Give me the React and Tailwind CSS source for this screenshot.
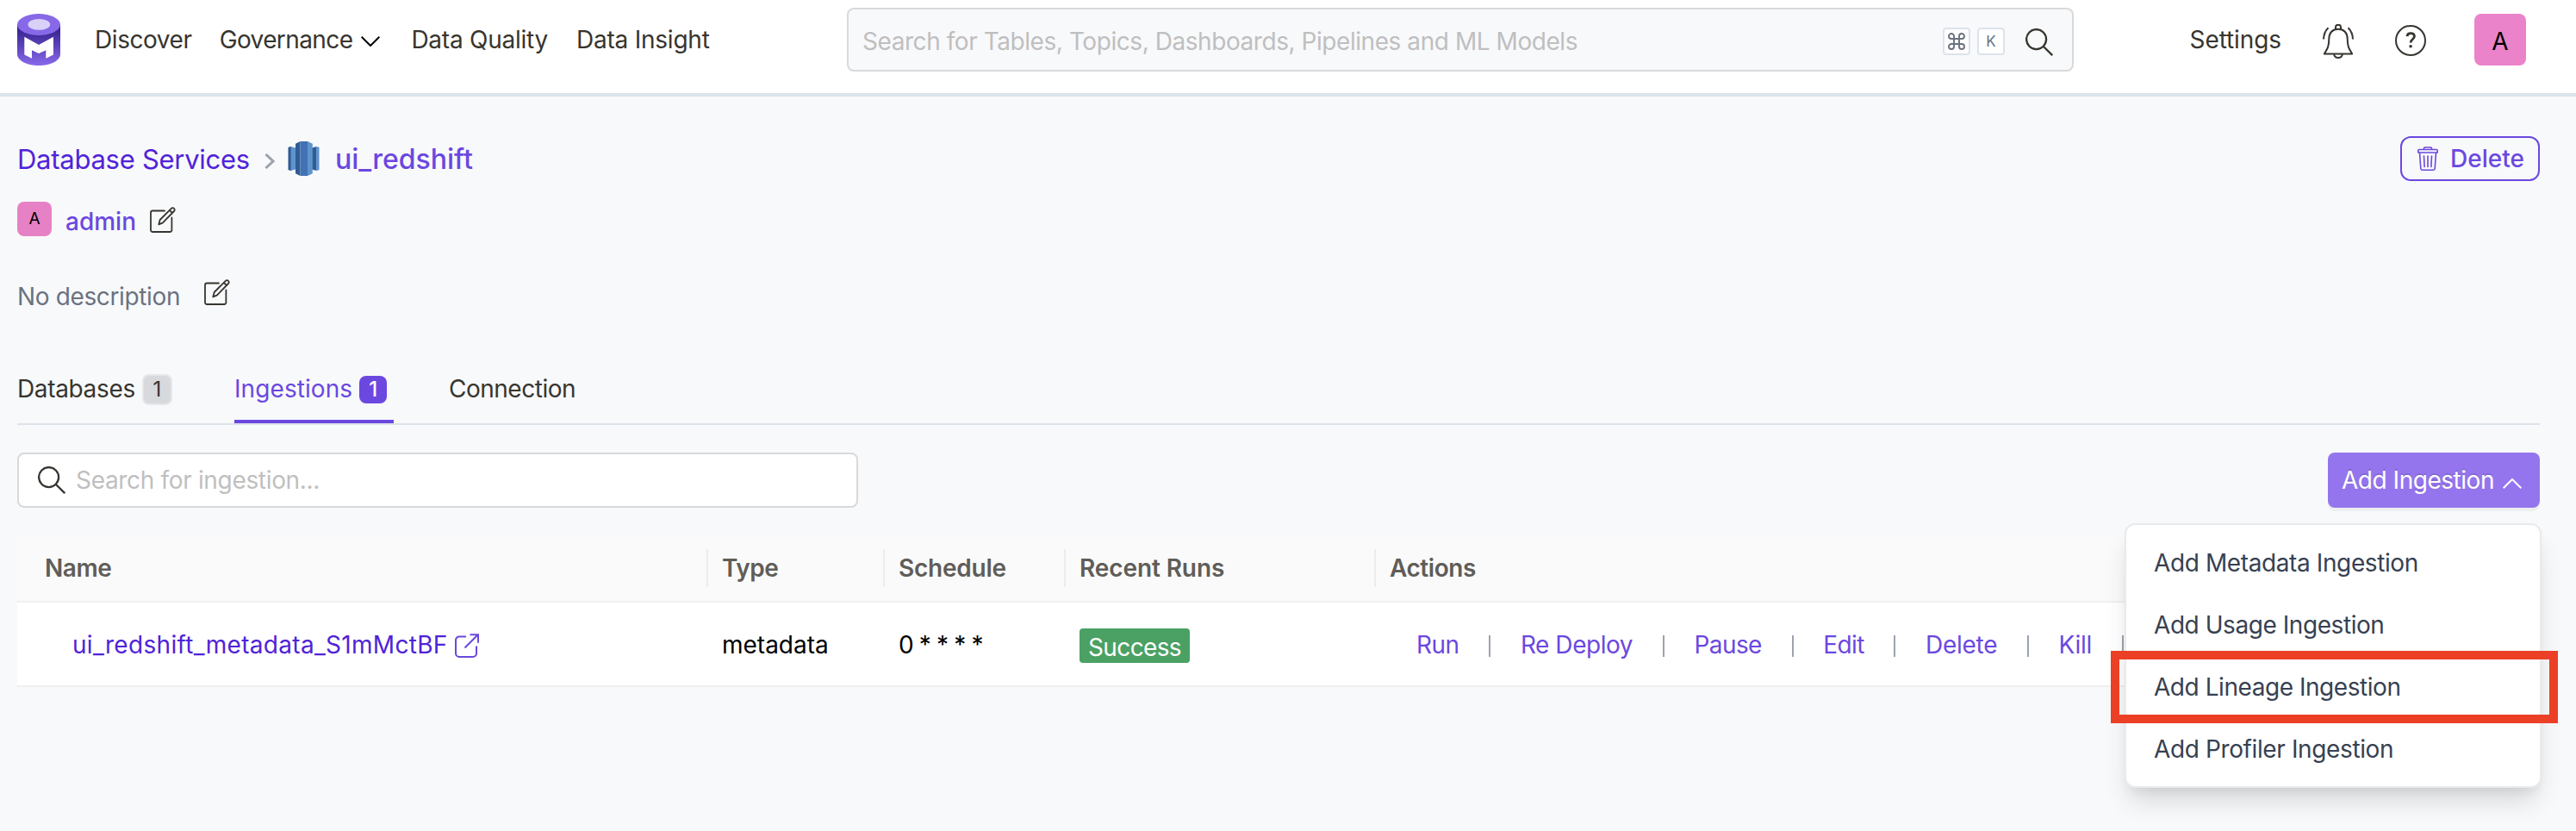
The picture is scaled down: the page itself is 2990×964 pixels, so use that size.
import React from "react";

function LogoIcon() {
  return (
    <svg className="h-[60px] w-[50px] shrink-0" viewBox="0 0 50 60" fill="none">
      <defs>
        <linearGradient id="logo-body" x1="0" y1="16" x2="0" y2="60" gradientUnits="userSpaceOnUse">
          <stop offset="0" stopColor="#34208d" />
          <stop offset="1" stopColor="#8869ea" />
        </linearGradient>
      </defs>
      <path d="M0 12.5V47C0 54 11 60 25 60s25-6 25-13V12.5Z" fill="url(#logo-body)" />
      <ellipse cx="25" cy="12.5" rx="25" ry="12.5" fill="#8769e8" />
      <ellipse cx="25.3" cy="12.4" rx="12.8" ry="6.4" fill="#dad1f8" />
      <path
        d="M8.3 26.7 25 36l17-9.3v20.8l-8.7 4.2v-9.4L25 46l-8-3.7v9.4l-8.7-4.2Z"
        fill="#fff"
      />
    </svg>
  );
}

function RedshiftIcon() {
  return (
    <svg className="h-10 w-[37px] shrink-0" viewBox="0 0 37 40">
      <path d="M3.500 6 9 7.500v25L3.500 34Z" fill="#5f93cc" />
      <path d="M3.800 5.700.500 7v26l3.300 1.300Z" fill="#2f5c94" />
      <path d="M33.500 6 28 7.500v25l5.500 1.500Z" fill="#2f5c94" />
      <path d="M33.200 5.700 36.500 7v26l-3.300 1.300Z" fill="#5f93cc" />
      <path d="M14.500 0 9 2.700v34.600l5.500 2.700Z" fill="#2f5c94" />
      <path d="M23 0l5.800 2.700v34.600L23 40Z" fill="#5f93cc" />
      <path d="M14.500 0H23v40h-8.500Z" fill="#4272b4" />
    </svg>
  );
}

function SearchIcon() {
  return (
    <svg className="size-8 shrink-0" viewBox="0 0 32 32" fill="none" stroke="#37352f" strokeWidth="2.300">
      <circle cx="12.600" cy="12.600" r="11.500" />
      <path d="m20.700 20.700 10.500 10.500" />
    </svg>
  );
}

function EditIcon() {
  return (
    <svg className="size-[30px] shrink-0" viewBox="0 0 30 30" fill="none" stroke="#37352f" strokeWidth="1.800" strokeLinejoin="round" strokeLinecap="round">
      <path d="M17 4.500H3.200A2.200 2.200 0 0 0 1 6.700v20A2.200 2.200 0 0 0 3.200 29h20a2.200 2.200 0 0 0 2.200-2.300V12.500" />
      <path d="M10.300 20.300 11.700 15 24.800 1.800a2.200 2.200 0 0 1 3.200 0 2.200 2.200 0 0 1 0 3.200L15 18.300ZM22.800 3.800l3.200 3.200" />
    </svg>
  );
}

function BellIcon() {
  return (
    <svg className="h-10 w-9 shrink-0" viewBox="0 0 36 40" fill="none" stroke="#37352f" strokeWidth="2" strokeLinejoin="round">
      <path d="M1.800 34.500C6 28 7.300 25 7.300 17 7.300 10 11.500 5.700 18 5.700S28.700 10 28.700 17c0 8 1.300 11 5.500 17.500Z" />
      <path d="M15 6V3.500a3 2.800 0 0 1 6 0V6M13.200 34.800c.3 2.600 2.200 4.200 4.800 4.200s4.500-1.600 4.800-4.200" />
      <path d="M1 17.500C1.200 11.500 3 7.500 6.500 4.200M35 17.500c-.2-6-2-10-5.500-13.300" />
    </svg>
  );
}

function HelpIcon() {
  return (
    <svg className="size-9 shrink-0" viewBox="0 0 36 36" fill="none" stroke="#37352f" strokeWidth="2">
      <circle cx="18" cy="18" r="17" />
      <path d="M14 13.200c.2-2.200 1.800-3.600 4.200-3.600 2.500 0 4.200 1.400 4.200 3.600 0 3.300-4.300 3.300-4.300 7.300" strokeWidth="2.800" />
      <circle cx="18.100" cy="24.800" r="1.800" fill="#37352f" stroke="none" />
    </svg>
  );
}

function CommandIcon() {
  return (
    <svg className="size-5" viewBox="0 0 20 20" fill="none" stroke="#6b7280" strokeWidth="1.900">
      <path d="M7 7V4a3 3 0 1 0-3 3h12a3 3 0 1 0-3-3v12a3 3 0 1 0 3-3H4a3 3 0 1 0 3 3Z" />
    </svg>
  );
}

function TrashIcon() {
  return (
    <svg className="h-7 w-6 shrink-0" viewBox="0 0 24 28" fill="none" stroke="#6b48e0" strokeWidth="1.600" strokeLinejoin="round" strokeLinecap="round">
      <path d="M7.500 3V2q0-1 1-1h7q1 0 1 1v1M2 3.500h20q1.200 0 1.200 1.200V7H.8V4.700Q.8 3.500 2 3.500ZM2.500 7l1.300 18.500q.2 1.700 1.700 1.700h13q1.500 0 1.700-1.700L21.500 7M7.500 11l.6 12.500M12 11v12.500M16.500 11l-.6 12.500" />
    </svg>
  );
}

function ExternalIcon() {
  return (
    <svg className="size-7 shrink-0" viewBox="0 0 28 28" fill="none" stroke="#6b48e0" strokeWidth="2">
      <path d="M13 3.500H5a4 4 0 0 0-4 4V23a4 4 0 0 0 4 4h16a4 4 0 0 0 4-4V14.500" />
      <path d="M11.500 16.500 26.500 1.500M17.500 1.200H27v9.500" />
    </svg>
  );
}

function Chevron({ d, className }) {
  return (
    <svg className={className} viewBox="0 0 22 12" fill="none" stroke="currentColor" strokeWidth="2">
      <path d={d} />
    </svg>
  );
}

const actions = [
  ["Run", "tracking-[-0.54px]"],
  ["Re Deploy", "tracking-[-0.44px]"],
  ["Pause", "tracking-[-0.6px]"],
  ["Edit", "tracking-[-0.6px]"],
  ["Delete", "tracking-[-0.3px]"],
  ["Kill", "tracking-[-0.3px]"],
];

const menuItems = [
  ["Add Metadata Ingestion", "tracking-[-0.39px]"],
  ["Add Usage Ingestion", "tracking-[-0.44px]"],
  ["Add Lineage Ingestion", "tracking-[-0.45px]"],
  ["Add Profiler Ingestion", "tracking-[-0.38px]"],
];

const columns = [
  ["Name", "pl-8 tracking-[-0.42px]"],
  ["Type", "pl-4 tracking-[-0.46px]"],
  ["Schedule", "pl-4 tracking-[-0.24px]"],
  ["Recent Runs", "pl-4 tracking-[-0.1px]"],
  ["Actions", "pl-4 tracking-[-0.46px]"],
];

function Header() {
  return (
    <header className="flex h-28 items-center border-b-4 border-[#dce3ea] bg-white pb-4 pl-5 pr-[58px] text-[#37352f]">
      <LogoIcon />
      <nav className="ml-10 flex w-[873px] shrink-0 items-center whitespace-nowrap">
        <a className="tracking-[-0.43px]">Discover</a>
        <a className="ml-8 flex items-center tracking-[-0.6px]">
          Governance
          <Chevron d="M.7.700 11 11 21.300.700" className="ml-2.5 mt-1 h-3 w-[22px] text-black" />
        </a>
        <a className="ml-9 tracking-[-0.24px]">Data Quality</a>
        <a className="ml-[33px] tracking-[-0.23px]">Data Insight</a>
      </nav>
      <div className="flex h-[74px] w-[1424px] shrink-0 items-center rounded-lg border-2 border-[#d9d9d9] bg-[#f8f9fb] pl-4 pr-[22px]">
        <span className="flex-1 pt-1 tracking-[-0.44px] text-[#bfbfbf]">
          Search for Tables, Topics, Dashboards, Pipelines and ML Models
        </span>
        <kbd className="mt-1 flex size-8 items-center justify-center rounded border-2 border-[#dce3ec] bg-white">
          <CommandIcon />
        </kbd>
        <kbd className="ml-2 mt-1 flex size-8 items-center justify-center rounded border-2 border-[#dce3ec] bg-white font-[Inter] text-[17px] leading-none text-[#6b7280]">
          K
        </kbd>
        <span className="ml-6 mt-1.5">
          <SearchIcon />
        </span>
      </div>
      <div className="ml-auto flex items-center">
        <a className="tracking-[-0.1px]">Settings</a>
        <span className="ml-12 mt-1">
          <BellIcon />
        </span>
        <span className="ml-12 mt-0.5">
          <HelpIcon />
        </span>
        <div className="ml-14 flex size-[60px] items-center justify-center rounded-lg bg-[#eb83ca] pt-[3px] text-black">A</div>
      </div>
    </header>
  );
}

export default function App() {
  return (
    <div className="h-[964px] w-[2990px] overflow-hidden bg-[#f8f9fb] font-[Inter,sans-serif] text-[28px] leading-[44px]">
      <Header />

      <main className="pl-5 pr-[42px]">
        <div className="flex items-start justify-between pt-[46px]">
          <div className="flex h-[52px] items-center text-[31px]">
            <a className="pt-0.5 tracking-[-0.27px] text-[#5023d8]">Database Services</a>
            <svg className="ml-[17px] mt-1.5 h-[18px] w-3" viewBox="0 0 12 18" fill="none" stroke="#9ca3af" strokeWidth="3">
              <path d="m1.500 1 8.500 8-8.500 8" />
            </svg>
            <span className="ml-[15px]">
              <RedshiftIcon />
            </span>
            <span className="ml-[18px] pt-px text-[32px] font-medium text-[#6b48e0]">ui_redshift</span>
          </div>
          <button className="flex h-[52px] w-[162px] items-center rounded-xl border-2 border-[#6b48e0] pl-[18px] font-medium text-[#6b48e0]">
            <TrashIcon />
            <span className="ml-3.5">Delete</span>
          </button>
        </div>

        <div className="mt-6 flex h-10 items-center">
          <div className="flex size-10 items-center justify-center rounded-lg bg-[#e781c6] text-[19px] text-black">A</div>
          <span className="ml-4 pt-1.5 font-medium text-[#6b48e0]">admin</span>
          <span className="ml-4 mt-0.5">
            <EditIcon />
          </span>
        </div>

        <div className="mt-12 flex h-11 items-center">
          <span className="tracking-[-0.36px] text-[#6b7280]">No description</span>
          <span className="-mt-2.5 ml-7">
            <EditIcon />
          </span>
        </div>

        <div className="mt-[59px] flex h-[68px] border-b-2 border-[#dce3ea] text-[#37352f]">
          <div className="flex h-[51px] w-[252px] items-center">
            <span className="tracking-[-0.35px]">Databases</span>
            <span className="ml-2 mt-0.5 flex h-9 w-[35px] items-center justify-center rounded-lg border-2 border-[#e5e7ea] bg-[#d7d9dd] text-2xl">1</span>
          </div>
          <div className="flex h-[66px] w-[185px] border-b-4 border-[#6b48e0] text-[#6b48e0]">
            <div className="flex h-[51px] items-center">
              <span className="tracking-[0.08px]">Ingestions</span>
              <span className="ml-2 mt-0.5 flex size-8 items-center justify-center rounded-lg bg-[#6b48e0] text-2xl font-medium text-white">1</span>
            </div>
          </div>
          <span className="ml-16 flex h-[51px] items-center tracking-[-0.49px]">Connection</span>
        </div>

        <div className="mt-8 flex justify-between">
          <div className="flex h-16 w-[976px] items-center rounded-lg border-2 border-[#d9d9d9] bg-white pl-[22px]">
            <SearchIcon />
            <span className="ml-3 tracking-[-0.33px] text-[#bfbfbf]">Search for ingestion...</span>
          </div>
          <div className="relative">
            <button className="flex h-16 w-[246px] items-center rounded-lg bg-[#9575ee] pl-4 text-white shadow-[0_4px_0_rgba(0,0,0,0.045)]">
              <span className="whitespace-nowrap tracking-[-0.47px] [text-shadow:0_-2px_0_rgba(0,0,0,0.12)]">Add Ingestion</span>
              <Chevron d="M.7 11.300 11 1 21.300 11.300" className="ml-2.5 mt-2 h-3 w-[22px]" />
            </button>
            <ul className="absolute -right-0.5 top-[82px] z-10 h-[307px] w-[484px] rounded-xl border-2 border-[#e9eaec] bg-white py-2 shadow-[0_20px_30px_-6px_rgba(0,0,0,0.14),0_8px_12px_-4px_rgba(0,0,0,0.06)]">
              {menuItems.map(([label, tracking]) => (
                <li key={label} className="flex h-[72px] items-center pl-8 text-[#374151]">
                  <span className={tracking}>{label}</span>
                </li>
              ))}
            </ul>
            <div className="absolute -right-[21px] top-[230px] z-20 h-[84px] w-[519px] border-10 border-[#eb4026]" />
          </div>
        </div>

        <section className="mt-8">
          <div className="grid h-[78px] grid-cols-[802px_205px_210px_360px_1fr] items-center rounded-t-lg border-b-2 border-[#f0f0f0] bg-[#fafafa] font-semibold text-[#5f5d59]">
            {columns.map(([label, cls]) => (
              <div key={label} className={`flex h-11 items-center border-r-2 border-[#ececec] last:border-r-0 ${cls}`}>
                {label}
              </div>
            ))}
          </div>
          <div className="grid h-[98px] grid-cols-[802px_205px_210px_360px_1fr] items-center border-b-2 border-[#f0f0f0] bg-white text-black">
            <div className="flex items-center pl-16 pt-px">
              <a className="tracking-[0.31px] text-[#5023d8]">ui_redshift_metadata_S1mMctBF</a>
              <span className="ml-2 mt-0.5">
                <ExternalIcon />
              </span>
            </div>
            <div className="pl-4 pt-px">metadata</div>
            <div className="pl-4 pt-px tracking-[-0.84px]">0 * * * *</div>
            <div className="pl-4">
              <span className="mt-1 flex h-10 w-32 items-center justify-center rounded bg-[#4aa163] pt-[3px] tracking-[-0.64px] text-white">Success</span>
            </div>
            <div className="flex items-center gap-[34.7px] pl-[47px] pt-px">
              {actions.map(([label, tracking]) => (
                <React.Fragment key={label}>
                  <a className={`whitespace-nowrap text-[#6b48e0] ${tracking}`}>{label}</a>
                  <span className="mt-1 h-[25px] w-0.5 bg-[#9ca3af]" />
                </React.Fragment>
              ))}
            </div>
          </div>
        </section>
      </main>
    </div>
  );
}
